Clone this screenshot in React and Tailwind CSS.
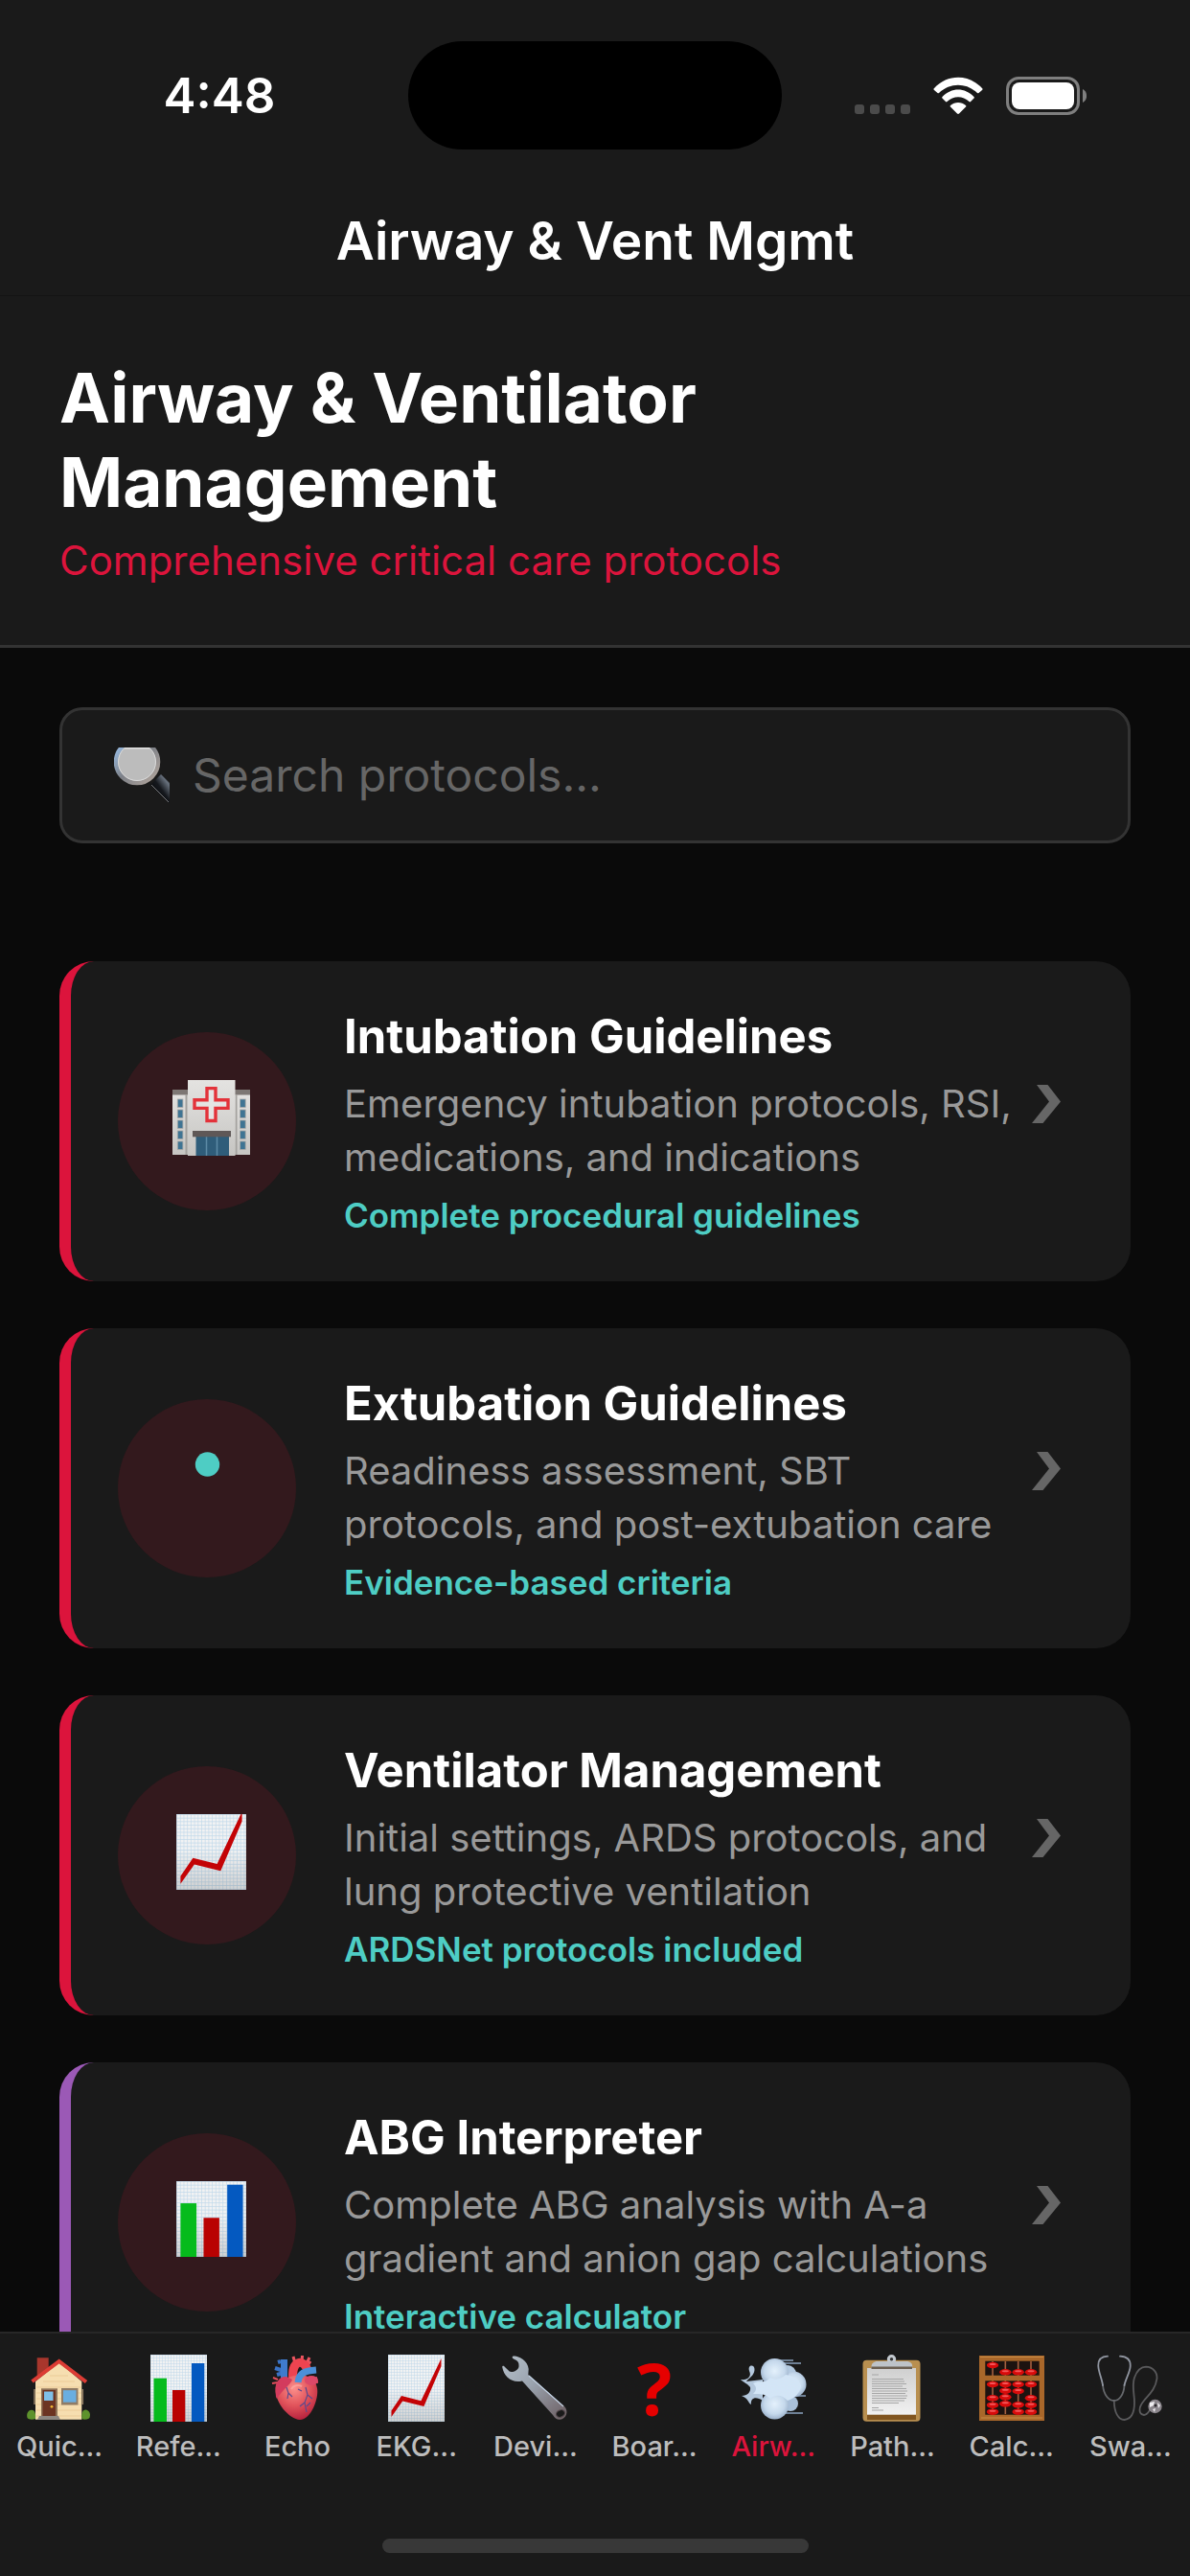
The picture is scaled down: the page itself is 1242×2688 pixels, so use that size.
import React, { useState } from 'react';

const IconDefs = () => (
  <svg className="absolute h-0 w-0" aria-hidden="true">
    <defs>
      <pattern id="grid" width="3" height="3" patternUnits="userSpaceOnUse">
        <rect width="3" height="3" fill="#f1f2f3" />
        <path d="M0 0H3M0 0V3" stroke="#bfd8ea" strokeWidth="1" />
      </pattern>
      <linearGradient id="shade" x1="0" y1="0" x2="0" y2="1">
        <stop offset="0.5" stopColor="#000" stopOpacity="0" />
        <stop offset="1" stopColor="#000" stopOpacity="0.14" />
      </linearGradient>
      <linearGradient id="wall" x1="0" y1="0" x2="0" y2="1">
        <stop offset="0" stopColor="#e4e3e1" />
        <stop offset="1" stopColor="#c6c5c2" />
      </linearGradient>
      <linearGradient id="steel" x1="0" y1="0" x2="1" y2="1">
        <stop offset="0" stopColor="#b4bfc9" />
        <stop offset="0.45" stopColor="#9aa3ae" />
        <stop offset="1" stopColor="#6b5c60" />
      </linearGradient>
      <radialGradient id="puff" cx="0.5" cy="0.45" r="0.6">
        <stop offset="0" stopColor="#e4f1fc" />
        <stop offset="0.6" stopColor="#c6d9ec" />
        <stop offset="1" stopColor="#93a9c4" />
      </radialGradient>
      <radialGradient id="muscle" cx="0.45" cy="0.3" r="0.75">
        <stop offset="0" stopColor="#fb8f8b" />
        <stop offset="0.5" stopColor="#e2555c" />
        <stop offset="1" stopColor="#b11c3a" />
      </radialGradient>
      <linearGradient id="rim" x1="0" y1="0" x2="1" y2="1">
        <stop offset="0" stopColor="#9cc4f0" />
        <stop offset="0.5" stopColor="#7d8087" />
        <stop offset="1" stopColor="#b5a89e" />
      </linearGradient>
      <linearGradient id="handle" x1="0" y1="1" x2="1" y2="0">
        <stop offset="0.2" stopColor="#050608" />
        <stop offset="0.5" stopColor="#15181d" />
        <stop offset="0.7" stopColor="#67707c" />
        <stop offset="0.85" stopColor="#20242a" />
      </linearGradient>
      <linearGradient id="paper" x1="0" y1="0" x2="0" y2="1">
        <stop offset="0" stopColor="#cfcfcf" />
        <stop offset="1" stopColor="#f1f1f1" />
      </linearGradient>
    </defs>
  </svg>
);

const BarChart = ({ className, viewBox = '0 0 59 70' }) => (
  <svg className={className} viewBox={viewBox} aria-hidden="true">
    <rect width="59" height="70" fill="url(#grid)" />
    <rect width="59" height="70" fill="url(#shade)" />
    <rect x="3.5" y="24.7" width="13.5" height="45.3" fill="#06bb1c" />
    <rect x="23" y="37" width="13.3" height="33" fill="#b90202" />
    <rect x="43" y="9" width="13.3" height="61" fill="#0459c0" />
  </svg>
);

const LineChart = ({ className, viewBox = '0 0 59 70' }) => (
  <svg className={className} viewBox={viewBox} aria-hidden="true">
    <rect width="59" height="70" fill="url(#grid)" />
    <rect width="59" height="70" fill="url(#shade)" />
    <path
      d="M3.5 58.5 14 43 34.4 48.2 55.5 4V12L37.4 54 15.2 48.6 3.5 65Z"
      fill="#c30306"
    />
  </svg>
);

const Hospital = ({ className }) => (
  <svg className={className} viewBox="0 0 81 79" aria-hidden="true">
    <path d="M0 12H81V78H0Z" fill="url(#wall)" />
    <path d="M0 10H17V15.5H0ZM64 10H81V15.5H64Z" fill="#7d7774" />
    {[20, 31, 42, 53, 64].map(y => (
      <g key={y} fill="#3f7493" stroke="#a9a8a6" strokeWidth="0.8">
        <rect x="5.3" y={y} width="5.6" height="8.4" />
        <rect x="70.6" y={y} width="5.6" height="8.4" />
      </g>
    ))}
    <path d="M14.5 15V78M66.5 15V78" stroke="#a3a19e" strokeWidth="2" />
    <rect x="16" width="49.5" height="79" fill="url(#wall)" />
    <path
      d="M36 8.6H45V20.8H58V29.4H45V42.5H36V29.4H23V20.8H36Z"
      fill="#e4e4e4"
      stroke="#e3323a"
      strokeWidth="3.4"
    />
    <rect x="24.5" y="58" width="34.5" height="21" fill="#2f5d7a" />
    <path d="M35.5 59V79M46.5 59V79" stroke="#5d8ba6" strokeWidth="1.5" />
    <rect x="21" y="53" width="40" height="6.3" fill="#5f5857" />
  </svg>
);

const Dot = ({ className }) => (
  <svg className={className} viewBox="0 0 81 79" aria-hidden="true">
    <circle cx="36.5" cy="18" r="12.7" fill="#4ecdc4" />
  </svg>
);

const House = ({ className }) => (
  <svg className={className} viewBox="0 0 70 70" aria-hidden="true">
    <path d="M11.7 3.3H23.7V15L11.7 24Z" fill="#a8362c" />
    <path d="M10 28 34.7 8 58.3 28V67.7H10Z" fill="#f6deb0" />
    <path
      d="M11 34H58M11 40H58M11 46H58M11 52H58M11 58H58M11 64H58M18 28H51M25 22H44"
      stroke="#e6c68f"
      strokeWidth="0.7"
    />
    <path d="M9 36V52M59.3 36V52" stroke="#9a8468" strokeWidth="1.5" />
    <path
      d="M6.5 28 34.7 7 63 28.5"
      fill="none"
      stroke="#dc3c34"
      strokeWidth="4"
    />
    <rect x="16" y="35.3" width="17" height="29" fill="#8f7358" />
    <rect x="17.5" y="37" width="13.5" height="27.5" fill="#6c3422" />
    <rect x="19" y="38.5" width="9.5" height="9.5" fill="#7fbfe8" />
    <circle cx="27" cy="54.3" r="1.4" fill="#f2b632" />
    <rect x="37" y="35" width="17.5" height="17.5" fill="#8f7c66" />
    <rect x="39" y="37.2" width="13.5" height="12.5" fill="#6aaee0" />
    <path d="M14 64H34L36 68H12Z" fill="#8d8781" />
    <path d="M1.5 66C0 60 4 57 7 58 10 58 10.5 64 10 67 7 68 3 68 1.5 66Z" fill="#5d922c" />
    <path d="M58.5 67C57.5 60 60 57 63 57.5 67 59 68 63 66 66.5 63 68 61 68 58.5 67Z" fill="#5d922c" />
  </svg>
);

const Heart = ({ className }) => (
  <svg className={className} viewBox="0 0 70 70" fill="none" aria-hidden="true">
    <path d="M33 9 31 2M40 8 40.5 1M45 9 48 3M47 10 49 7" stroke="#ea5560" strokeWidth="3" />
    <path d="M15 26 10 24M15 29 9 30M52 25 56 24M53 28 57 29" stroke="#e24d5c" strokeWidth="2" />
    <path d="M21 6 21.5 24M18 7 15 8M21 17 12 14M21 19 14 21" stroke="#3a72c4" strokeWidth="4" />
    <path d="M21.5 5V26" stroke="#3f7bcd" strokeWidth="7" />
    <path d="M31 28C28 4 43 4 46 17" stroke="#ee4450" strokeWidth="9" />
    <path
      d="M26 24C38 18 54 22 56 35 58 45 50 68 38 68 27 67 12 51 12.5 35 13 27 19 23 26 24Z"
      fill="url(#muscle)"
    />
    <path d="M13 44C11 28 17 22 24 23L30 26C28 32 20 36 14 46Z" fill="#d33b5d" />
    <ellipse cx="50" cy="27" rx="7" ry="5" fill="#db4868" />
    <path d="M36 29C37 19 43 17 55 16" stroke="#4b90d8" strokeWidth="7" />
    <path
      d="M24 34 26 40 25 46M26 40 30 44M44 34 46 42 43 50 45 60M46 42 51 46M43 50 38 54M45 54 49 50M36 36 40 38"
      stroke="#5b4a8e"
      strokeWidth="1.2"
    />
    <path d="M29 36C31 32 36 31 40 33" stroke="#ffb1a9" strokeWidth="2" opacity="0.6" />
  </svg>
);

const Wrench = ({ className }) => (
  <svg className={className} viewBox="0 0 70 70" aria-hidden="true">
    <path
      d="M11 2C14 0 27 5 27.7 15L27.3 21 65 54C70 59 67 67 60.5 67.8 57 68 55 66 53 63L21 27.5C10 30 2 23 .2 13 .5 11 2 12 3 13L7.7 17.5C10 19 17 17 17.5 12.5 18 8 16 6 13 5 11 4 10 3 11 2Z"
      fill="url(#steel)"
    />
    <path d="M28 22 64 54" stroke="#c4d3e4" strokeWidth="1.2" />
    <ellipse cx="61" cy="61.5" rx="4.6" ry="3.6" fill="#1a1a1a" stroke="#54494c" transform="rotate(-25 61 61.5)" />
  </svg>
);

const Question = () => (
  <span className="block h-[70px] text-center font-['Open_Sans',sans-serif] text-[76px] leading-[70px] font-bold text-[#e60000]">
    ?
  </span>
);

const Wind = ({ className }) => (
  <svg className={className} viewBox="0 0 70 70" aria-hidden="true">
    <path
      d="M1 26C8 27 13 23 10 17 8 10 16 10 15.5 16 15 22 10 24 7 28L24 26V48C17 43 11 45 12 52 8 50 10 46 2 43 8 43 12 39 11 34 8 30 4 29 1 26Z"
      fill="#b4c8dd"
    />
    <path d="M40 6H56M46 9H64M48 61H66M50 43H69" stroke="#8ba3bf" strokeWidth="1.5" />
    <circle cx="53" cy="51" r="8" fill="#a9c0d9" />
    <circle cx="50" cy="20" r="9" fill="#b3c9e0" />
    <circle cx="56" cy="31" r="13.5" fill="url(#puff)" />
    <circle cx="36.5" cy="18.5" r="14.5" fill="url(#puff)" />
    <circle cx="36.5" cy="53" r="14.5" fill="url(#puff)" />
    <path
      d="M14 30C20 26 27 31 32 24 38 27 44 25 48 21 56 22 63 26 64 33 63 40 57 46 50 48 44 42 38 41 32 46 26 40 19 41 14 41 18 37 18 34 14 30Z"
      fill="#d3e5f6"
    />
  </svg>
);

const Clipboard = ({ className }) => (
  <svg className={className} viewBox="0 0 70 70" aria-hidden="true">
    <rect x="4.5" y="5.7" width="60" height="64" rx="4" fill="#b88f50" />
    <path d="M9 62H60V68H9Z" fill="#805520" />
    <rect x="9" y="14" width="51" height="48.7" fill="url(#paper)" />
    <path
      d="M14 21H21M14 25.5H47M14 28H48M14 30.5H50M14 33H46M14 35.5H50M14 38H51M14 40.5H49M14 43H51M14 45.5H50M14 48H48M14 50.5H42M14 55.5H21M14 58H26"
      stroke="#a6a6a6"
      strokeWidth="1.1"
    />
    <circle cx="34.5" cy="4.8" r="3.2" fill="#333" stroke="#c3c9cf" strokeWidth="3" />
    <path d="M13.5 14C13 9 16 7 20 7H50C54 7 57 9 56 14Z" fill="#bdc3c8" />
    <rect x="13.5" y="12.5" width="42.5" height="2.5" fill="#6b6053" />
  </svg>
);

const beads = [
  [15, [11, 31, 45.3, 52.7, 59.7]],
  [28.3, [18.3, 31, 37.7, 44.3, 51.3]],
  [41.7, [18.3, 31, 38, 52.3, 59.7]],
  [55, [18.3, 31, 45.3, 52.7, 59.7]],
];

const Abacus = ({ className }) => (
  <svg className={className} viewBox="0 0 70 70" aria-hidden="true">
    <rect x="1" y="1" width="68" height="68" fill="#a9672a" />
    <path d="M2 2.5H68M3 66H67" stroke="#c98b45" strokeWidth="1" />
    <rect x="7.3" y="6.7" width="56.4" height="56" fill="#1d1310" />
    {beads.map(([x, ys]) => (
      <g key={x}>
        <path d={`M${x} 7V62`} stroke="#a5603f" strokeWidth="1.6" />
        {ys.map(y => (
          <g key={y}>
            <ellipse cx={x} cy={y} rx="6.2" ry="3.3" fill="#d80b0b" />
            <ellipse cx={x} cy={y - 1} rx="3.5" ry="1" fill="#f4585a" />
          </g>
        ))}
      </g>
    ))}
    <rect x="6" y="21.7" width="58" height="5.6" fill="#a9672a" />
  </svg>
);

const Stethoscope = ({ className }) => (
  <svg className={className} viewBox="0 0 70 70" fill="none" strokeLinecap="round" aria-hidden="true">
    <path
      d="M17.8 49C18 60 22 68 28.5 68 37 67 39 58 39 50 39 40 36 33 39 24 42 16 47 12.7 51 12.7 58 13 63 18 62.5 25 61 36 54 42 49 48 43 55 43 62 49 63 52 63 53 61 55 58"
      stroke="#5a5a5c"
      strokeWidth="1.8"
    />
    <path d="M6 32C7 42 12 48 17.8 48 23 48 28 42 28.5 32" stroke="#66686c" strokeWidth="1.8" />
    <path
      d="M11 1.7C4 2 1 5 1.3 12 1.5 18 5 25 6 32M24 1.7C31 2 35 5 34.7 12 34.5 18 30 25 28.5 32"
      stroke="#9095a0"
      strokeWidth="1.8"
    />
    <circle cx="60.5" cy="54" r="7.2" fill="#8b868c" />
    <path d="M55 50 60 49 59 53 55 55ZM63 50 66 53 64 56ZM58 57 61 56 60 60Z" fill="#efedf0" />
    <circle cx="61" cy="53" r="1.5" fill="#2a272b" />
  </svg>
);

const Magnifier = ({ className }) => (
  <svg className={className} viewBox="0 0 58 58" aria-hidden="true">
    <path d="M38 39 49 28 66 45 66 66Z" fill="url(#handle)" />
    <path d="M39 39 57 57" stroke="#77787b" strokeWidth="1" />
    <circle cx="24" cy="15" r="22" fill="#bcbcbc" stroke="url(#rim)" strokeWidth="4.5" />
    <circle cx="24" cy="15" r="19.5" fill="none" stroke="#dadada" />
    <path d="M11 .7H37" stroke="#e6e6e6" strokeWidth="1.4" />
  </svg>
);

const Chevron = () => (
  <svg className="h-10 w-[30px]" viewBox="0 0 30 40" aria-hidden="true">
    <path d="M5 0H16.500L30 17.500 11.500 40H0L18 17.500Z" fill="#666" />
  </svg>
);

const protocols = [
  {
    id: 'intubation',
    title: 'Intubation Guidelines',
    description: 'Emergency intubation protocols, RSI, medications, and indications',
    note: 'Complete procedural guidelines',
    accent: 'border-[#dc143c]',
    icon: <Hospital className="h-[79px] w-[81px]" />,
  },
  {
    id: 'extubation',
    title: 'Extubation Guidelines',
    description: 'Readiness assessment, SBT protocols, and post-extubation care',
    note: 'Evidence-based criteria',
    accent: 'border-[#dc143c]',
    icon: <Dot className="h-[79px] w-[81px]" />,
  },
  {
    id: 'ventilator',
    title: 'Ventilator Management',
    description: 'Initial settings, ARDS protocols, and lung protective ventilation',
    note: 'ARDSNet protocols included',
    accent: 'border-[#dc143c]',
    icon: <LineChart className="h-[79px] w-[73px]" viewBox="0 6 59 64" />,
  },
  {
    id: 'abg',
    title: 'ABG Interpreter',
    description: 'Complete ABG analysis with A-a gradient and anion gap calculations',
    note: 'Interactive calculator',
    accent: 'border-[#9b59b6]',
    icon: <BarChart className="h-[79px] w-[73px]" viewBox="0 6 59 64" />,
  },
];

const tabs = [
  { id: 'quick', label: 'Quic...', icon: <House className="size-[70px]" /> },
  { id: 'reference', label: 'Refe...', icon: <BarChart className="h-[70px] w-[59px]" /> },
  { id: 'echo', label: 'Echo', icon: <Heart className="size-[70px]" /> },
  { id: 'ekg', label: 'EKG...', icon: <LineChart className="h-[70px] w-[59px]" /> },
  { id: 'devices', label: 'Devi...', icon: <Wrench className="size-[70px]" /> },
  { id: 'boards', label: 'Boar...', icon: <Question /> },
  { id: 'airway', label: 'Airw...', icon: <Wind className="size-[70px]" /> },
  { id: 'pathways', label: 'Path...', icon: <Clipboard className="size-[70px]" /> },
  { id: 'calculators', label: 'Calc...', icon: <Abacus className="size-[70px]" /> },
  { id: 'swan', label: 'Swa...', icon: <Stethoscope className="size-[70px]" /> },
];

const StatusBar = () => (
  <div className="grid grid-cols-[1fr_390px_1fr] items-center pt-[43px]">
    <time className="pl-8 text-center text-[51px] leading-[60px] font-semibold">
      4:48
    </time>
    <div className="h-[113px] rounded-full bg-black" />
    <div className="flex items-center justify-center gap-6 pr-8">
      <div className="flex gap-1.5 self-end pb-px">
        {[0, 1, 2, 3].map(i => (
          <span key={i} className="size-2.5 rounded-[3px] bg-[#4b4b4b]" />
        ))}
      </div>
      <svg className="h-[39px] w-[52px]" viewBox="0 0 52 39" aria-hidden="true">
        <path
          d="M.8 12.3C15 -3 37 -3 51.2 12.3 52 13 51.5 13.5 51 14L47.5 17C47 17.5 46.5 17.3 46 17 34.5 6 17.5 6 6 17 5.5 17.3 5 17.5 4.5 17L1 14C.5 13.5 0 13 .8 12.3ZM9.5 21C19 11 33 11 42.5 21 43 21.5 43 22 42.5 22.5L39 26C38.5 26.5 38 26.5 37.5 26 31 19.5 21 19.5 14.5 26 14 26.5 13.5 26.5 13 26L9.5 22.5C9 22 9 21.5 9.5 21ZM18 30C22.5 26 29.5 26 34 30 34.5 30.5 34.5 31 34 31.5L27 38.5C26.5 39 25.5 39 25 38.5L18 31.5C17.5 31 17.5 30.5 18 30Z"
          fill="#fff"
        />
      </svg>
      <svg className="h-10 w-[84px]" viewBox="0 0 84 40" aria-hidden="true">
        <rect x="1.5" y="1.5" width="74" height="37" rx="11.5" fill="none" stroke="#7f7f7f" strokeWidth="3" />
        <rect x="6" y="6" width="65" height="28" rx="8" fill="#fff" />
        <path d="M80 13C85.5 15.5 85.5 24.5 80 27Z" fill="#7f7f7f" />
      </svg>
    </div>
  </div>
);

const ProtocolCard = ({ protocol }) => (
  <a
    href={`#${protocol.id}`}
    className={'flex items-center rounded-[36px] border-l-[12px] bg-[#1a1a1a] p-[49px] ' + protocol.accent}
  >
    <div className="flex size-[186px] shrink-0 items-center justify-center rounded-full bg-[#33191d] pb-2 pl-2">
      {protocol.icon}
    </div>
    <div className="ml-[50px] flex-1">
      <h2 className="text-[49px] leading-[60px] font-bold">
        {protocol.title}
      </h2>
      <p className="mt-3 text-[40px] leading-[56px] text-[#999]">
        {protocol.description}
      </p>
      <p className="mt-3 text-[35px] leading-[40px] font-semibold text-[#4ecdc4]">
        {protocol.note}
      </p>
    </div>
    <div className="shrink-0 pr-6 pb-9">
      <Chevron />
    </div>
  </a>
);

const App = () => {
  const [query, setQuery] = useState('');
  const [active, setActive] = useState('airway');
  const shown = protocols.filter(p =>
    p.title.toLowerCase().includes(query.toLowerCase())
  );

  return (
    <div className="flex h-screen flex-col overflow-hidden bg-[#0a0a0a] font-[Inter,sans-serif] text-white">
      <IconDefs />
      <header className="border-b border-[#141414] bg-[#1a1a1a] pb-6">
        <StatusBar />
        <p className="mt-[62px] text-center text-[55px] leading-[66px] font-semibold">
          Airway &amp; Vent Mgmt
        </p>
      </header>

      <main className="min-h-0 flex-1 overflow-y-auto [scrollbar-width:none]">
        <section className="border-b-3 border-[#333] bg-[#1a1a1a] px-[62px] py-[62px]">
          <h1 className="max-w-[800px] text-[71px] leading-[88px] font-bold">
            Airway &amp; Ventilator Management
          </h1>
          <p className="mt-3 text-[42px] leading-[52px] text-[#dc143c]">
            Comprehensive critical care protocols
          </p>
        </section>

        <div className="px-[62px] pt-[62px]">
          <div className="flex h-[142px] items-center rounded-[24px] border-3 border-[#333] bg-[#1a1a1a] px-[54px]">
            <label htmlFor="search" aria-label="Search protocols">
              <Magnifier className="size-[58px]" />
            </label>
            <input
              id="search"
              type="text"
              value={query}
              onChange={e => setQuery(e.target.value)}
              placeholder="Search protocols..."
              className="ml-6 flex-1 bg-transparent text-[48px] leading-[60px] outline-none placeholder:text-[#666]"
            />
          </div>
        </div>

        <div className="flex flex-col gap-[49px] px-[62px] pt-[123px] pb-[62px]">
          {shown.map(protocol => (
            <ProtocolCard key={protocol.id} protocol={protocol} />
          ))}
        </div>
      </main>

      <nav className="border-t-2 border-[#272727] bg-[#1a1a1a] pt-[22px] pb-6">
        <div className="grid grid-cols-10">
          {tabs.map(tab => (
            <a
              key={tab.id}
              href={`#${tab.id}`}
              onClick={() => setActive(tab.id)}
              className={
                'flex flex-col items-center gap-2 text-[29px] leading-[36px] font-medium ' +
                (active === tab.id ? 'text-[#dc143c]' : 'text-[#bdbdbd]')
              }
            >
              {tab.icon}
              {tab.label}
            </a>
          ))}
        </div>
        <div className="mx-auto mt-[78px] h-[15px] w-[445px] rounded-full bg-[#383838]" />
      </nav>
    </div>
  );
};

export default App;
